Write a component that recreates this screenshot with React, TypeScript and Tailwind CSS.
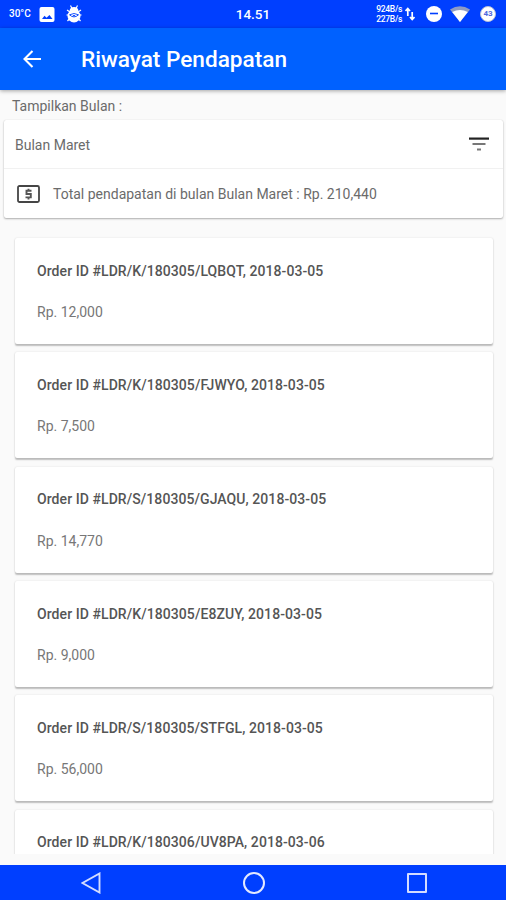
import React from 'react';

interface Order {
  id: string;
  date: string;
  amount?: string;
}

const orders: Order[] = [
  { id: 'LDR/K/180305/LQBQT', date: '2018-03-05', amount: '12,000' },
  { id: 'LDR/K/180305/FJWYO', date: '2018-03-05', amount: '7,500' },
  { id: 'LDR/S/180305/GJAQU', date: '2018-03-05', amount: '14,770' },
  { id: 'LDR/K/180305/E8ZUY', date: '2018-03-05', amount: '9,000' },
  { id: 'LDR/S/180305/STFGL', date: '2018-03-05', amount: '56,000' },
  { id: 'LDR/K/180306/UV8PA', date: '2018-03-06' },
];

const StatusBar = () => (
  <div className="grid h-7 shrink-0 grid-cols-3 items-center bg-[#003fff] text-white">
    <div className="flex items-center pl-[9px]">
      <span className="w-[30px] text-[10px] leading-none font-medium">30°C</span>
      <svg className="h-[15px] w-[16px]" viewBox="0 0 16 15">
        <rect x="0.5" width="15" height="15" rx="2" fill="#fff" />
        <path d="M3 12l2.500-3.200 2 2L10.500 8l3 4z" fill="#003fff" />
      </svg>
      {/* Debug bug */}
      <svg className="ml-[10px] h-[18px] w-[18px]" viewBox="0 0 18 18" fill="none">
        <path d="M5.500 0.500l1.500 3M12.500 0.500l-1.500 3M2 5l3 2M16 5l-3 2M2.500 16l2.500-3M15.500 16l-2.500-3M1.500 10h3M16.500 10h-3" stroke="#fff" strokeWidth="1.200" />
        <path d="M4.500 6Q5 2 9 2t4.500 4z" fill="#fff" />
        <ellipse cx="9" cy="11" rx="6.500" ry="6.500" fill="#fff" />
        <path d="M4.500 9.800Q9 7.200 13.500 9.800Q9 14 4.500 9.800z" stroke="#003fff" strokeWidth="0.900" />
        <path d="M7.500 10h3L9 11.500z" fill="#003fff" />
      </svg>
    </div>
    <div className="pt-px text-center text-[13.5px] leading-none font-medium">14.51</div>
    <div className="flex items-center justify-end pr-[10px]">
      <div className="flex w-[27px] flex-col items-end text-[8.5px] leading-[10px] font-medium tracking-[-0.3px]">
        <span>924B/s</span>
        <span>227B/s</span>
      </div>
      <svg className="ml-[3px] h-[14px] w-[10px]" viewBox="0 0 10 14" fill="none" stroke="#fff" strokeWidth="1.700">
        <path d="M2.800 9V1.500M0.500 4l2.300-2.500L5 4M7.200 5v7.500M5 10l2.200 2.500L9.500 10" />
      </svg>
      <svg className="ml-[11px] h-4 w-4" viewBox="0 0 16 16">
        <circle cx="8" cy="8" r="8" fill="#fff" />
        <path d="M4 7.500h8" stroke="#003fff" strokeWidth="1.600" />
      </svg>
      <svg className="ml-[8px] h-[16px] w-[20px]" viewBox="0 0 20 16">
        <path d="M0 3.500Q10-3 20 3.500L10 16z" fill="#8f9cc4" />
        <path d="M2.200 6Q10 1.800 17.800 6L10 16z" fill="#fff" />
      </svg>
      <div className="ml-[10px] flex h-4 w-4 items-center justify-center rounded-full border border-[#b5bed8] bg-white text-[8px] leading-none font-bold text-[#5068dd]">
        43
      </div>
    </div>
  </div>
);

const AppBar = () => (
  <header className="z-10 flex h-[62px] shrink-0 items-center bg-[#0061ff] text-white shadow-[0_1px_4px_rgba(0,0,0,0.35)]">
    <svg className="ml-[23px] h-[18px] w-[18px]" viewBox="0 0 18 18" fill="none" stroke="#fff" strokeWidth="2.100">
      <path d="M18 9H2M9.500 1L1.500 9l8 8" />
    </svg>
    <h1 className="ml-[40px] pt-[3px] text-[22.600px] leading-none font-medium whitespace-nowrap">Riwayat Pendapatan</h1>
  </header>
);

const Summary = () => (
  <section className="mr-[3px] ml-[4px] mt-[4px] h-[98px] shrink-0 rounded-[2px] bg-white shadow-[0_1px_2px_rgba(0,0,0,0.3),0_0_1px_rgba(0,0,0,0.15)]">
    <div className="flex h-[49px] items-center justify-between border-b border-[#f1f1f1] pr-[14px] pl-[11px]">
      <span className="pt-[2px] text-[14px] text-[#6b6b6b]">Bulan Maret</span>
      <svg className="h-[14px] w-[20px]" viewBox="0 0 20 14">
        <path d="M0 0.500h20v2.200H0z" fill="#222" />
        <path d="M3.500 6h13v2h-13z" fill="#777" />
        <path d="M8 11.500h4v2H8z" fill="#777" />
      </svg>
    </div>
    <div className="flex h-[49px] items-center pt-px pl-[13px]">
      <svg className="h-[18px] w-[23px]" viewBox="0 0 23 18" fill="none">
        <rect x="1" y="1" width="21" height="16" rx="1.500" stroke="#454545" strokeWidth="1.800" />
        <path d="M14.500 5.700H9.500V9h4.300v3.400H8.500M11.500 3.700v2M11.500 12.400v2" stroke="#555" strokeWidth="1.900" />
      </svg>
      <span className="ml-[13px] pt-px text-[14px] whitespace-nowrap text-[#6b6b6b]">
        Total pendapatan di bulan Bulan Maret : Rp. 210,440
      </span>
    </div>
  </section>
);

const NavBar = () => (
  <nav className="flex h-[35px] shrink-0 items-center bg-[#003fff]">
    <svg className="ml-[81px] h-[22px] w-[20px]" viewBox="0 0 20 22" fill="none" stroke="#d3dcff" strokeWidth="1.900">
      <path d="M18.500 1.500v19L1.500 11z" />
    </svg>
    <div className="ml-[142px] h-[22px] w-[22px] rounded-full border-2 border-[#e3e9ff]" />
    <div className="ml-[142px] h-[20px] w-[20px] rounded-[1px] border-2 border-[#d3dcff]" />
  </nav>
);

export default function App() {
  return (
    <div className="flex h-[900px] w-[506px] flex-col overflow-hidden bg-[#fafafa] font-['Roboto',sans-serif]">
      <StatusBar />
      <AppBar />
      <p className="mt-[6px] shrink-0 pl-[12px] text-[14px] leading-5 text-[#6b6b6b]">Tampilkan Bulan :</p>
      <Summary />

      {/* Order list, cut off above the navigation bar */}
      <main className="mt-[16px] mb-[11px] flex min-h-0 flex-1 flex-col gap-[8.35px] overflow-hidden pt-[4px] pr-[13px] pl-[15px]">
        {orders.map((order) => (
          <article
            key={order.id}
            className="h-[106px] shrink-0 rounded-[2px] bg-white px-[22px] pt-[22.500px] shadow-[0_1.5px_1.5px_rgba(0,0,0,0.24),0_0_2px_rgba(0,0,0,0.1)]"
          >
            <h2 className="text-[14px] leading-5 font-medium tracking-[0.07px] whitespace-nowrap text-[#555]">
              Order ID #{order.id}, {order.date}
            </h2>
            {order.amount && (
              <p className="mt-[21.5px] text-[14px] leading-5 text-[#777]">Rp. {order.amount}</p>
            )}
          </article>
        ))}
      </main>
      <NavBar />
    </div>
  );
}
